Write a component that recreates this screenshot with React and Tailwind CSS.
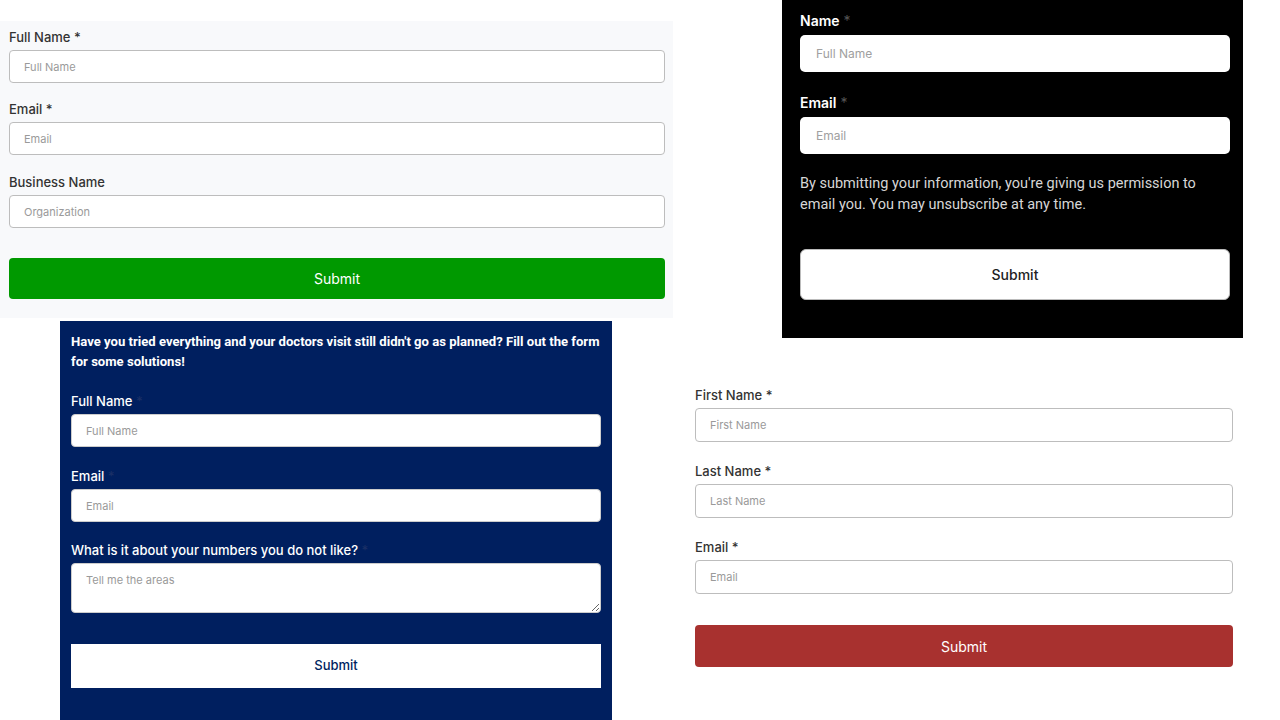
import React from 'react'

function Field({ label, placeholder, star = true, labelClass, inputClass, starClass, wrapClass }) {
  return (
    <div className={wrapClass}>
      <div className={labelClass}>
        {label}
        {star && <span className={starClass}> *</span>}
      </div>
      <input readOnly placeholder={placeholder} className={inputClass} />
    </div>
  )
}

const lightLabel = 'text-[13px] font-medium text-[#333] h-[21px] leading-[17px]'
const lightInput =
  'block w-full h-[33px] rounded-[4px] border border-[#bdbdbd] bg-white px-[14px] text-[11px] placeholder:text-[#9a9a9a] outline-none'
const navyLabel = 'text-[13px] font-medium text-white h-[23px] leading-[20px]'
const navyInput =
  'block w-full h-[33px] rounded-[4px] bg-white border border-[#ccc] px-[14px] text-[11px] placeholder:text-[#9a9a9a] outline-none'
const darkLabel = 'text-[14px] font-semibold text-white h-[23px] leading-[18px]'
const darkInput =
  'block w-[430px] h-[37px] rounded-[5px] bg-white px-[16px] text-[12px] placeholder:text-[#a0a0a0] outline-none'

export default function App() {
  return (
    <div className="relative w-[1280px] h-[720px] bg-white overflow-hidden font-['Inter',sans-serif]">
      {/* light form */}
      <div className="absolute left-0 top-[21px] w-[673px] h-[297px] bg-[#f8f9fb] pl-[9px] pr-[8px] pt-[8px]">
        <Field label="Full Name" placeholder="Full Name" labelClass={lightLabel} starClass="text-[#333]" inputClass={lightInput} />
        <Field
          label="Email"
          placeholder="Email"
          wrapClass="mt-[18px]"
          labelClass={lightLabel}
          starClass="text-[#333]"
          inputClass={lightInput}
        />
        <Field
          label="Business Name"
          placeholder="Organization"
          star={false}
          wrapClass="mt-[19px]"
          labelClass={lightLabel}
          inputClass={lightInput}
        />
        <button className="mt-[30px] w-full h-[41px] rounded-[4px] bg-[#009900] text-white text-[14px]">
          Submit
        </button>
      </div>

      {/* black form */}
      <div className="absolute left-[782px] top-0 w-[461px] h-[338px] bg-black px-[18px] pt-[12px]">
        <Field label="Name" placeholder="Full Name" labelClass={darkLabel} starClass="text-[#555] font-normal" inputClass={darkInput} />
        <Field
          label="Email"
          placeholder="Email"
          wrapClass="mt-[22px]"
          labelClass={darkLabel}
          starClass="text-[#555] font-normal"
          inputClass={darkInput}
        />
        <p className="mt-[19px] w-[420px] text-[14.5px] leading-[21px] text-[#d6d6d6] font-['Roboto',sans-serif]">
          By submitting your information, you're giving us permission to email you. You may unsubscribe at any time.
        </p>
        <button className="mt-[34px] w-[430px] h-[51px] rounded-[6px] bg-white border border-[#bbb] text-[14px] font-medium text-[#222]">
          Submit
        </button>
      </div>

      {/* navy form */}
      <div className="absolute left-[60px] top-[321px] w-[552px] h-[399px] bg-[#001f5f] px-[11px] pt-[11px]">
        <p className="text-[13.1px] leading-[20px] font-bold text-white font-['Roboto',sans-serif]">
          Have you tried everything and your doctors visit still didn't go as planned? Fill out the form for some solutions!
        </p>
        <Field
          label="Full Name"
          placeholder="Full Name"
          wrapClass="mt-[19px]"
          labelClass={navyLabel}
          starClass="text-[#1a2f66]"
          inputClass={navyInput}
        />
        <Field
          label="Email"
          placeholder="Email"
          wrapClass="mt-[19px]"
          labelClass={navyLabel}
          starClass="text-[#1a2f66]"
          inputClass={navyInput}
        />
        <div className="mt-[18px]">
          <div className={navyLabel}>
            What is it about your numbers you do not like?<span className="text-[#1a2f66]"> *</span>
          </div>
          <textarea
            readOnly
            placeholder="Tell me the areas"
            className="block w-full h-[50px] rounded-[4px] bg-white border border-[#ccc] px-[14px] pt-[8px] text-[11px] placeholder:text-[#9a9a9a] outline-none resize-y"
          />
        </div>
        <button className="mt-[31px] w-full h-[44px] bg-white text-[13px] font-medium text-[#001f5f]">
          Submit
        </button>
      </div>

      {/* white form */}
      <div className="absolute left-[695px] top-[387px] w-[538px]">
        <Field
          label="First Name"
          placeholder="First Name"
          labelClass={lightLabel}
          starClass="text-[#333]"
          inputClass="block w-full h-[34px] rounded-[4px] border border-[#bdbdbd] bg-white px-[14px] text-[11px] placeholder:text-[#9a9a9a] outline-none"
        />
        <Field
          label="Last Name"
          placeholder="Last Name"
          wrapClass="mt-[21px]"
          labelClass={lightLabel}
          starClass="text-[#333]"
          inputClass="block w-full h-[34px] rounded-[4px] border border-[#bdbdbd] bg-white px-[14px] text-[11px] placeholder:text-[#9a9a9a] outline-none"
        />
        <Field
          label="Email"
          placeholder="Email"
          wrapClass="mt-[21px]"
          labelClass={lightLabel}
          starClass="text-[#333]"
          inputClass="block w-full h-[34px] rounded-[4px] border border-[#bdbdbd] bg-white px-[14px] text-[11px] placeholder:text-[#9a9a9a] outline-none"
        />
        <button className="mt-[31px] w-full h-[42px] rounded-[4px] bg-[#a8312f] text-white text-[14px]">
          Submit
        </button>
      </div>
    </div>
  )
}
